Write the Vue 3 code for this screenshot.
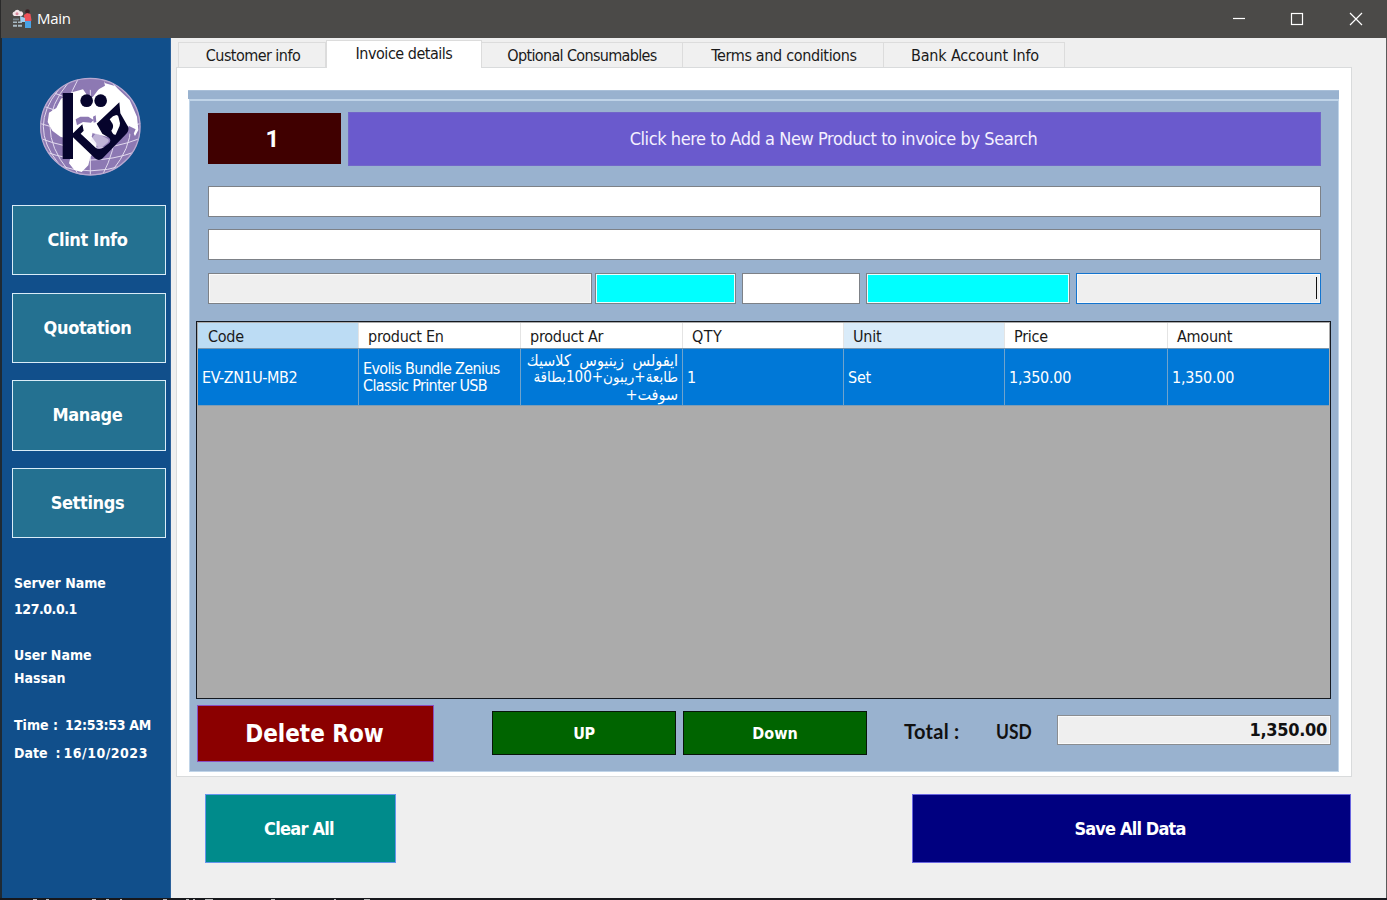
<script setup>
const navItems = ['Clint Info', 'Quotation', 'Manage', 'Settings']
const tabs = [
  { label: 'Customer info', cls: 't1' },
  { label: 'Invoice details', cls: 't2 active' },
  { label: 'Optional Consumables', cls: 't3' },
  { label: 'Terms and conditions', cls: 't4' },
  { label: 'Bank Account Info', cls: 't5' },
]
const columns = [
  { label: 'Code', cls: 'sorted' },
  { label: 'product En', cls: '' },
  { label: 'product Ar', cls: '' },
  { label: 'QTY', cls: 'qty' },
  { label: 'Unit', cls: 'hot' },
  { label: 'Price', cls: '' },
  { label: 'Amount', cls: '' },
]
</script>

<template>
  <div class="screen">
    <header class="titlebar">
      <svg class="app-icon" viewBox="0 0 20 20">
        <path d="M1 6a2.500 2.500 0 0 1 1.500-3.500A3 3 0 0 1 8 2.500a2.300 2.300 0 0 1 1.500 4.500H2z" fill="#f3e6ea" />
        <circle cx="5" cy="4.800" r="1.500" fill="#d98a9c" />
        <path d="M1 9.500h6v1.800H1z" fill="#75828a" />
        <path d="M1 12.500h4v1.600H1zM1 15.800h4v2H1zM6 12.500h4v1.600H6zM6 15.800h4v2H6z" fill="#a9bac4" />
        <circle cx="15.500" cy="2.600" r="2.300" fill="#3b2226" />
        <path d="M12 6l3-2L18.500 5l1 6.500-2 1h-5z" fill="#ee525a" />
        <path d="M8 7l5 2v4H8.500z" fill="#9fcdf0" />
        <path d="M13 12h6v7h-6z" fill="#4aa3e6" />
      </svg>
      <span class="title">Main</span>
      <svg class="controls" viewBox="0 0 168 38">
        <g fill="none" stroke="#fff" stroke-width="1.200">
          <path d="M13 18.500h12" />
          <rect x="71.500" y="13.500" width="11" height="11" />
          <path d="M130 13l12 12M142 13l-12 12" />
        </g>
      </svg>
    </header>

    <div class="body">
      <aside class="sidebar">
        <svg class="logo" viewBox="0 0 390 345">
          <defs>
            <clipPath id="globe"><ellipse cx="196" cy="170" rx="150" ry="146" /></clipPath>
          </defs>
          <ellipse cx="196" cy="170" rx="150" ry="146" fill="#8d79b3" />
          <g clip-path="url(#globe)">
            <g fill="none" stroke="#e2daee" stroke-width="3">
              <path d="M46 205q150 60 300 0M60 245q136 50 272 0M95 285q100 35 205 0M44 160q150 50 304 0M60 110q60 25 130 25M90 70q50 22 110 22" />
              <path d="M196 24v292M160 26q-80 140 0 290M130 38q-110 130 0 264M100 60q-90 110 0 220M232 26q80 140 0 290M262 38q110 130 0 264" />
            </g>
            <path fill="#fff" d="M228 36l42 12 44 42 22 50 4 40-10 18-14-26-12-6-8 20-50 14-42-10-34-30-10-60 44-20 18-24z" />
            <path fill="#fff" d="M72 128l22-14 14-28 36-20 30-8 14 20 0 60 20 30-8 32 14 20 0 20-18 20-6 26-20 20-22-6-16-20 10-40-14-34-22-6-24-18-14-26z" />
            <path fill="#8d79b3" d="M160 30l36-6 40 5 4 18-28 16-28-6zM152 148l14-8 24 0 16 10-8 8-24-2-18 10zM204 140l8-4 2 20-8 2zM312 168l20 10-8 18-12-6z" />
            <path fill="#8d79b3" d="M170 196l28 24-6 14-22-10z" opacity=".7" />
          </g>
          <ellipse cx="196" cy="170" rx="149" ry="145" fill="none" stroke="#b8a9d0" stroke-width="4" />
          <g fill="#06042c">
            <rect x="113" y="69" width="31" height="198" />
            <circle cx="185" cy="92" r="19" />
            <circle cx="227" cy="92" r="19" />
            <path d="M144 190l28-27 4 19-9 9 45 42q10 8 22 0l18-13q8-9 0-17l-20-12-17-30 68-64 3 33 24 42q2 11-6 19l-71 74q-11 10-23 0l-66-63z" />
            <path fill="#fff" d="M254 148q10-12 20-13 7 1 7 8l4 17q0 7-4 14l-9 20q-6 2-10-6l-3-6q8-10 4-20z" />
            <path fill="#e9e3f2" d="M212 190l16 6 22 12q4 6-4 12l-13 10q-9 6-17-1l-20-18z" opacity=".55" />
          </g>
        </svg>
        <nav class="nav">
          <button v-for="item in navItems" :key="item">{{ item }}</button>
        </nav>
        <div class="info">
          <p class="server">Server Name</p>
          <p class="ip">127.0.0.1</p>
          <p class="user">User Name</p>
          <p class="hassan">Hassan</p>
          <p class="time"><span>Time :</span><span class="clock">12:53:53 AM</span></p>
          <p class="date"><span>Date</span><span>:</span><span class="day">16/10/2023</span></p>
        </div>
      </aside>

      <main class="main">
        <div class="tabs">
          <div v-for="t in tabs" :key="t.label" class="tab" :class="t.cls"><span>{{ t.label }}</span></div>
        </div>
        <section class="page">
          <div class="panel">
            <div class="strip"></div>
            <div class="group">
              <div class="top-row">
                <div class="count">1</div>
                <button class="add"><span>Click here to Add a New Product to invoice by Search</span></button>
              </div>
              <div class="field wide"></div>
              <div class="field wide"></div>
              <div class="fields">
                <div class="field grey f1"></div>
                <div class="field cyan f2"></div>
                <div class="field f3"></div>
                <div class="field cyan f4"></div>
                <div class="field grey focus f5"><i class="caret"></i></div>
              </div>
              <div class="grid">
                <div class="grid-row head">
                  <div v-for="c in columns" :key="c.label" class="cell" :class="c.cls">{{ c.label }}</div>
                </div>
                <div class="grid-row data">
                  <div class="cell code">EV-ZN1U-MB2</div>
                  <div class="cell en">Evolis Bundle Zenius<br />Classic Printer USB</div>
                  <div class="cell ar" dir="rtl">
                    <span class="spread">ايفولس زينيوس كلاسيك</span>
                    <span>طابعة+ريبون+100بطاقة</span>
                    <span class="large">سوفت+</span>
                  </div>
                  <div class="cell">1</div>
                  <div class="cell">Set</div>
                  <div class="cell">1,350.00</div>
                  <div class="cell">1,350.00</div>
                </div>
              </div>
              <div class="actions">
                <button class="delete">Delete Row</button>
                <button class="move up">UP</button>
                <button class="move down">Down</button>
                <span class="total-label">Total :</span>
                <span class="currency">USD</span>
                <div class="total-value">1,350.00</div>
              </div>
            </div>
          </div>
        </section>
        <footer class="footer">
          <button class="clear">Clear All</button>
          <button class="save">Save All Data</button>
        </footer>
      </main>
    </div>
    <svg class="desktop-edge" viewBox="0 0 1387 2">
      <path d="M33 1.500h4M46 1.500h3M92 1.500h4M106 1.500h3M120 1.500h2M163 1.500h4M186 1.500h3M193 1.500h2M205 1.500h8M271 1.500h4M334 1.500h2M364 1.500h6" stroke="#b9b9b9" stroke-width="1" />
    </svg>
  </div>
</template>

<style>
html, body { margin: 0; overflow: hidden; }
</style>

<style scoped>
* { box-sizing: border-box; }
.screen {
  width: 1387px; height: 900px; overflow: hidden; display: flex; flex-direction: column;
  font-family: "DejaVu Sans Condensed", "DejaVu Sans", "Noto Sans", sans-serif; font-stretch: condensed;
  color: #1a1a1a; background: #efefef; font-size: 16px; white-space: nowrap;
}
button { font: inherit; letter-spacing: inherit; padding: 0; margin: 0; border-radius: 0; display: flex; align-items: center; justify-content: center; color: #fff; }
p { margin: 0; }
.titlebar { height: 38px; flex: none; background: #4b4a48; display: flex; align-items: center; padding-left: 11px; border-left: 1px solid #2a2a2a; }
.app-icon { width: 20px; height: 20px; margin-top: -1px; }
.title { color: #fff; font: 15px "Open Sans", "Noto Sans", sans-serif; letter-spacing: -.3px; margin: -2px 0 0 5px; }
.controls { width: 168px; height: 38px; margin-left: auto; margin-right: -1px; }
.body { height: 860px; flex: none; display: flex; border-right: 1px solid #5a5a5a; }
.sidebar { width: 171px; flex: none; background: #114f8b; border-left: 2px solid #1f2a33; border-right: 1px solid #2c619a; }
.logo { display: block; width: 130px; height: 115px; margin: 32px 0 0 23px; }
.nav { padding: 20px 0 0 10px; display: flex; flex-direction: column; gap: 17.500px; letter-spacing: -.35px; }
.nav button { width: 154px; height: 70.200px; background: #247191; border: 1.500px solid #d9ecf8; font-weight: bold; font-size: 18px; padding: 0 3px 1px 0; }
.info { padding: 36px 0 0 12px; color: #fff; font-weight: bold; font-size: 14px; line-height: 18px; }
.ip { margin-top: 8px; letter-spacing: -.45px; }
.user { margin-top: 28px; }
.hassan { margin-top: 5px; }
.time { margin-top: 29px; display: flex; gap: 7px; }
.clock { letter-spacing: -.3px; }
.date { margin-top: 10px; display: flex; gap: 4px; }
.date span:first-child { margin-right: 4px; }
.date .day { letter-spacing: .5px; margin-left: -1px; }
.main { flex: 1; min-width: 0; padding-left: 5px; background: #efefef; }
.tabs { height: 29px; padding: 2px 0 0 2px; display: flex; align-items: flex-end; }
.tab { height: 25px; border: 1px solid #dcdcdc; border-left: 0; border-bottom: 0; background: #f0f0f0; display: flex; justify-content: center; align-items: center; padding-top: 1px; }
.t1 { width: 148px; border-left: 1px solid #dcdcdc; letter-spacing: -.55px; padding-left: 2px; }
.t2 { width: 156px; letter-spacing: -.48px; }
.t3 { width: 201px; letter-spacing: -.65px; }
.t4 { width: 201px; letter-spacing: -.35px; padding-left: 2px; }
.t5 { width: 181px; letter-spacing: -.15px; padding-left: 2px; }
.tab.active { height: 28px; background: #fff; margin-bottom: -1px; padding-bottom: 3px; padding-top: 0; border-left: 1px solid #dcdcdc; z-index: 1; }
.page { width: 1176px; height: 710px; background: #fff; border: 1px solid #d9dbdc; padding: 22px 0 0 11px; }
.panel { width: 1151px; height: 682px; }
.strip { height: 9px; background: #99b2cf; border-top: 1px solid #a9bfd8; }
.group { width: 1150px; height: 673px; margin-left: 1px; background: #99b2cf; border: 1px solid #c0d4e8; border-width: 2px 1px 1px; padding-top: 11px; }
.top-row { display: flex; padding-left: 18px; }
.count { width: 133px; height: 51px; margin: 1px 7px 0 0; background: #400000; color: #fff; font: bold 24px/52px Roboto, sans-serif; text-align: center; padding-right: 4px; }
.add { width: 973px; height: 54px; background: #6a5acd; border: 1px solid #7266c9; color: #f4f0ff; font-size: 18px; letter-spacing: -.43px; padding: 0 2px 1px 0; }
.field { background: #fff; border: 1px solid #7d8187; }
.wide { width: 1113px; height: 31px; margin: 20px 0 0 18px; }
.wide + .wide { margin-top: 12px; }
.fields { display: flex; padding-left: 18px; margin-top: 13px; }
.fields .field { height: 31px; }
.grey { background: #efefef; box-shadow: inset 0 0 0 1px #fafafa; }
.cyan { background: #0ff; box-shadow: inset 0 0 0 1px #e8ffff; }
.focus { border-color: #1274cf; }
.f1 { width: 384px; margin-right: 3px; }
.f2 { width: 141px; margin-right: 6px; }
.f3 { width: 118px; margin-right: 6px; }
.f4 { width: 204px; margin-right: 6px; }
.f5 { width: 245px; display: flex; justify-content: flex-end; padding: 3px 3px 0 0; }
.caret { width: 1px; height: 22px; background: #111; }
.grid { width: 1135px; height: 378px; margin: 17px 0 0 6px; border: 1px solid #14181f; background: #ababab; padding: 1px; letter-spacing: -.25px; }
.grid-row { display: grid; grid-template-columns: 161px 162px 162px 161px 161px 163px 161px; }
.head { height: 26px; background: #fff; border-bottom: 1px solid #7795ae; }
.head .cell { padding: 1px 0 0 9px; border-right: 1px solid #e4e4e4; display: flex; align-items: center; }
.head .sorted { background: #bcdcf4; padding-left: 10px; }
.head .qty { letter-spacing: .5px; }
.head .hot { background: #d9ebf9; }
.data { height: 57px; background: #0078d7; color: #fff; border-bottom: 1px solid #7f9db5; }
.data .cell { border-right: 1px solid #6fa3cc; display: flex; align-items: center; padding: 0 0 0 4px; line-height: 17px; overflow: hidden; }
.data .code { letter-spacing: -.45px; }
.data .en { letter-spacing: -.65px; }
.data .ar { padding: 1px 4px 0 0; font-size: 15px; letter-spacing: 0; flex-direction: column; align-items: flex-start; justify-content: center; }
.spread { font-size: 16px; word-spacing: 4px; }
.large { font-size: 16px; }
.cell:last-child { border-right: 0 !important; }
.actions { display: flex; align-items: flex-start; padding: 6px 0 0 7px; font-weight: bold; }
.delete { width: 237px; height: 57px; background: #8b0000; border: 1px solid #8a4fc0; font-size: 24px; padding-right: 2px; }
.move { width: 184px; height: 44px; margin-top: 6px; background: #006400; border: 1px solid #07150a; font-size: 16px; }
.up { margin-left: 58px; letter-spacing: -.4px; }
.down { margin-left: 7px; }
.total-label, .currency { font: bold 20px/24px Lato, sans-serif; color: #111; margin-top: 14px; }
.total-label { margin-left: 37px; width: 92px; letter-spacing: .3px; }
.currency { width: 61px; transform: scaleX(.87); transform-origin: left; }
.total-value { width: 274px; height: 30px; margin-top: 10px; background: #efefef; border: 1px solid #8a8d91; box-shadow: inset 0 0 0 1px #fafafa; text-align: right; font-size: 18px; line-height: 27px; letter-spacing: -.3px; padding-right: 3px; color: #111; }
.footer { display: flex; justify-content: space-between; width: 1175px; padding: 17px 0 0 29px; font-weight: bold; font-size: 18px; }
.clear { width: 191px; height: 69px; background: #008b8b; border: 1px solid #6495ed; padding-right: 3px; letter-spacing: -.75px; }
.save { width: 439px; height: 69px; background: #000080; border: 1px solid #6a66e0; padding-right: 3px; letter-spacing: -.85px; }
.desktop-edge { display: block; width: 1387px; height: 2px; flex: none; background: #17181c; }
</style>
